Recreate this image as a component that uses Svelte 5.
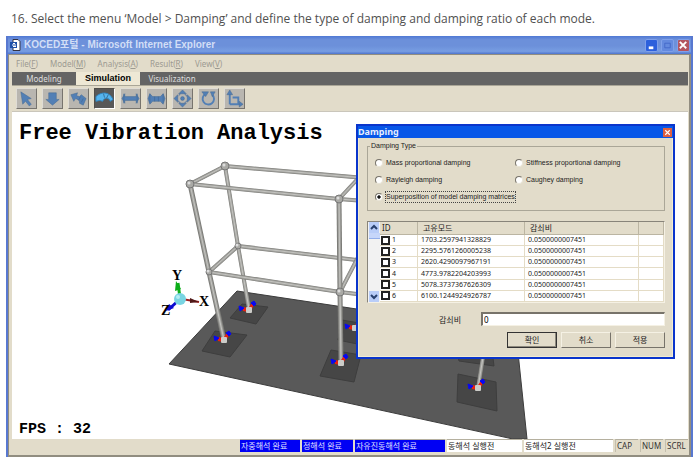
<script>
    const menus = [
        ["File", "F"],
        ["Model", "M"],
        ["Analysis", "A"],
        ["Result", "R"],
        ["View", "V"],
    ];
    const tabs = ["Modeling", "Simulation", "Visualization"];
    const tools = ["select", "load", "force", "free", "static", "dynamic", "pan", "rotate", "scale"];
    const dampingTypes = [
        "Mass proportional damping",
        "Stiffness proportional damping",
        "Rayleigh damping",
        "Caughey damping",
        "Superposition of model damping matrices",
    ];
    const modes = [
        "1703.2597941328829",
        "2295.5761260005238",
        "2620.4290097967191",
        "4773.9782204203993",
        "5078.3737367626309",
        "6100.1244924926787",
    ];
    const supports = [
        [250, 309],
        [225, 339],
        [356, 327],
        [342, 362],
        [479, 387],
    ];
    const pads = [
        "243,303 269,306 257,323 231,317",
        "216,330 248,334 231,356 203,350",
        "343,319 372,324 368,345 339,339",
        "332,349 362,354 355,381 321,375",
        "459,373 497,381 498,410 458,401",
        "458,352 494,357 495,365 460,360",
    ];
    // back members first so the front ones overlap them
    const members = [
        [226, 165, 366, 177],
        [239, 245, 366, 260],
        [226, 165, 239, 245],
        [239, 245, 250, 308],
        [340, 198, 366, 170],
        [341, 291, 366, 243],
        [191, 183, 226, 165],
        [210, 271, 239, 245],
        [485, 350, 479, 387],
        [191, 183, 340, 198],
        [340, 198, 366, 200],
        [210, 271, 341, 291],
        [341, 291, 366, 294],
    ];
    const columns = [
        [191, 183, 210, 271],
        [210, 271, 225, 339],
        [340, 198, 341, 291],
        [341, 291, 342, 361],
    ];
    const joints = [
        [226, 165, 4],
        [191, 183, 4],
        [340, 198, 4],
        [239, 245, 3],
        [210, 271, 3],
        [341, 291, 4],
    ];

    let activeTab = "Simulation";
    let activeTool = "free";
    let dampingType = dampingTypes[4];
    let ratio = "0";
</script>

<p class="caption">16. Select the menu ‘Model &gt; Damping’ and define the type of damping and damping ratio of each mode.</p>

<div class="window">
    <header class="titlebar">
        <svg class="app-icon" viewBox="0 0 11 12">
            <path d="M3 0.500h5l2 2v9H3z" fill="#fff" stroke="#334" stroke-width="1" />
            <path d="M0 3h7v6H0z" fill="#1c4fa8" />
            <path d="M2 6h4M3 4.500h2M3 7.500h3" stroke="#fff" stroke-width="1" />
        </svg>
        <h1>KOCED포털 - Microsoft Internet Explorer</h1>
        <button class="ctl" aria-label="Minimize"><svg viewBox="0 0 12 12"><path d="M3 7h5v3H3z" fill="#fff" /></svg></button>
        <button class="ctl dim" aria-label="Maximize"><svg viewBox="0 0 12 12"><path d="M3 3.500h6v5H3z" fill="none" stroke="#4468c8" /></svg></button>
        <button class="ctl close" aria-label="Close"><svg viewBox="0 0 12 12"><path d="M2 2l7 7M9 2l-7 7" stroke="#fff" stroke-width="2" /></svg></button>
    </header>

    <div class="body">
        <nav class="menubar">
            {#each menus as [name, key]}
                <button>{name}(<u>{key}</u>)</button>
            {/each}
        </nav>

        <div class="tabs">
            {#each tabs as tab}
                <button class:active={activeTab === tab} on:click={() => (activeTab = tab)}>{tab}</button>
            {/each}
        </div>

        <div class="toolbar">
            {#each tools as tool}
                <button class:active={activeTool === tool} aria-label={tool} on:click={() => (activeTool = tool)}>
                    <svg viewBox="0 0 20 20">
                        {#if tool === "select"}
                            <path class="fill" d="M4 3l11 7-4 1 4 5-2 2-4-5-3 3z" />
                        {:else if tool === "load"}
                            <path class="fill" d="M6 4h8v7h3l-7 6-7-6h3z" />
                        {:else if tool === "force"}
                            <path class="fill" d="M2 6l7-2-1 3 3 1 2-2 5 4-3 7-4-2v-3l-4-2-2 3z" />
                            <path d="M12 8l-2 4M15 10l-2 4" />
                        {:else if tool === "free"}
                            <path class="bright" d="M1 8c5-5 14-6 18 3l-3 2c-1-4-6-5-8 0l-3-1-4 1z" />
                            <path class="gap" d="M9 5l1 4M14 6l-2 4" />
                        {:else if tool === "static"}
                            <path class="fill" d="M1 10l3-5v3h12V5l3 5-3 5v-3H4v3z" />
                            <path d="M3 5v10M17 5v10" />
                        {:else if tool === "dynamic"}
                            <path class="fill" d="M1 10l2-5 3 3h8l3-3 2 5-2 6-3-3H6l-3 3z" />
                            <path d="M3 5v10M17 5v10M8 8v5M12 8v5" />
                        {:else if tool === "pan"}
                            <path class="fill" d="M10 1l4 4H6zM10 19l4-4H6zM1 10l4-4v8zM19 10l-4-4v8z" />
                            <circle class="fill" cx="10" cy="10" r="2" />
                            <path d="M6 7l2-2M12 5l3 3M15 12l-3 3M8 15l-3-3" />
                        {:else if tool === "rotate"}
                            <path class="ring" d="M7 5a6 6 0 1 0 7 1" />
                            <path class="fill" d="M3 3h7l-3 5zM12 3h5l-3 5z" />
                        {:else}
                            <path class="edge" d="M5 16V5M5 16h11M8 9h6v6" />
                            <path class="fill" d="M5 1l3 5H2zM19 16l-4-3v6z" />
                        {/if}
                    </svg>
                </button>
            {/each}
        </div>

        <svg class="scene" viewBox="13 111 676 327">
            <text class="heading" x="20" y="138">Free Vibration Analysis</text>
            <polygon points="170,363 238,290 517,332 528,438 514,438" fill="#595959" stroke="#3c3c3c" />
            {#each pads as points}
                <polygon {points} fill="#464646" stroke="#3e3e3e" />
            {/each}
            {#each members as [x1, y1, x2, y2]}
                <line class="tube-edge" {x1} {y1} {x2} {y2} />
                <line class="tube" {x1} {y1} {x2} {y2} />
                <line class="shine" {x1} {y1} {x2} {y2} />
            {/each}
            {#each columns as [x1, y1, x2, y2]}
                <line class="tube-edge column" {x1} {y1} {x2} {y2} />
                <line class="tube" {x1} {y1} {x2} {y2} />
                <line class="shine" {x1} {y1} {x2} {y2} />
            {/each}
            {#each joints as [cx, cy, r]}
                <circle {cx} {cy} {r} fill="#a9a9a5" stroke="#777" />
                <circle cx={cx - 1} cy={cy - 1} r="1.500" fill="#ddd" />
            {/each}
            {#each supports as [x, y]}
                <g transform="translate({x} {y})">
                    <path d="M-6 -3l5 1v4l-5-1zM0-3l3-4 2 2-2 4z" fill="#e82010" />
                    <path d="M-10 -4l5 2-4 3zM2-7l3-2 2 3-2 2z" fill="#0808f0" stroke="#0808f0" />
                    <rect x="-3" y="-3" width="6" height="6" rx="1" fill="#ccccc8" />
                </g>
            {/each}
            <path d="M181 297l-2-15" stroke="#0cae18" stroke-width="3" />
            <path d="M177 280l5 8-6 2z" fill="#0cae18" />
            <path d="M183 298l17 3" stroke="#a02020" stroke-width="2" />
            <path d="M191 297l9 4-9 1z" fill="#501818" />
            <path d="M180 299l-11 10" stroke="#0b0bd0" stroke-width="3" />
            <path d="M167 310l3-7 5 4z" fill="#0b0bd0" />
            <circle cx="181" cy="298" r="6" fill="#79d4e2" />
            <circle cx="179" cy="296" r="2" fill="#b4eef4" />
            <text class="axis" x="173" y="279">Y</text>
            <text class="axis" x="200" y="305">X</text>
            <text class="axis" x="162" y="314">Z</text>
            <text class="fps" x="20" y="432">FPS : 32</text>
        </svg>

        <footer class="status">
            <span class="done s1">자중해석 완료</span>
            <span class="done s2">정해석 완료</span>
            <span class="done s3">자유진동해석 완료</span>
            <span class="todo s4">동해석 실행전</span>
            <span class="todo s5">동해석2 실행전</span>
            <span class="key">CAP</span>
            <span class="key">NUM</span>
            <span class="key">SCRL</span>
        </footer>
    </div>
</div>

<div class="dialog" role="dialog" aria-label="Damping">
    <header>
        <h2>Damping</h2>
        <button aria-label="Close dialog"><svg viewBox="0 0 8 8"><path d="M2 2l4 4M6 2l-4 4" stroke="#fff" /></svg></button>
    </header>
    <div class="content">
        <fieldset>
            <legend>Damping Type</legend>
            {#each dampingTypes as type}
                <label class:focused={dampingType === type}>
                    <input type="radio" name="damping" value={type} bind:group={dampingType} />
                    <span>{type}</span>
                </label>
            {/each}
        </fieldset>

        <div class="list">
            <div class="scroll">
                <button aria-label="Scroll up"><svg viewBox="0 0 10 10"><path d="M2 6l3-3 3 3" /></svg></button>
                <i></i>
                <button aria-label="Scroll down"><svg viewBox="0 0 10 10"><path d="M2 3l3 3 3-3" /></svg></button>
            </div>
            <table>
                <thead>
                    <tr><th class="id">ID</th><th class="mode">고유모드</th><th class="ratio">감쇠비</th><th></th></tr>
                </thead>
                <tbody>
                    {#each modes as mode, i}
                        <tr>
                            <td><label><input type="checkbox" />{i + 1}</label></td>
                            <td>{mode}</td>
                            <td>0.0500000007451</td>
                            <td></td>
                        </tr>
                    {/each}
                </tbody>
            </table>
        </div>

        <div class="field">
            <label for="ratio">감쇠비</label>
            <input id="ratio" type="text" bind:value={ratio} />
        </div>

        <div class="actions">
            <button class="default">확인</button>
            <button>취소</button>
            <button>적용</button>
        </div>
    </div>
</div>

<style>
    :global(body) {
        background: #fff;
        font-family: "Noto Sans", "Noto Sans CJK KR", sans-serif;
    }

    button {
        margin: 0;
        padding: 0;
        border: 0;
        font-family: inherit;
        cursor: pointer;
    }

    svg {
        display: block;
    }

    .caption {
        margin: 0;
        padding: 9px 11px;
        height: 18px;
        font: 12px/20px "Open Sans", sans-serif;
        color: #505050;
        white-space: nowrap;
    }

    .window {
        margin: 0 7px 0 6px;
        border: solid #5878d0;
        border-width: 0 2px;
        background: #e2dcca;
    }

    .titlebar {
        display: flex;
        align-items: center;
        gap: 3px;
        height: 18px;
        padding: 0 1px 0 2px;
        background: linear-gradient(#4f78d4, #6c90da 20%, #6c90da 55%, #779de2 85%, #4d74cd);
    }

    .app-icon {
        width: 11px;
        height: 12px;
    }

    h1 {
        flex: 1;
        margin: 0;
        font-family: "Liberation Sans", "Noto Sans CJK KR", sans-serif;
        font-size: 10px;
        line-height: 16px;
        font-weight: bold;
        color: #d2def6;
    }

    .ctl {
        width: 13px;
        height: 13px;
        border: 1px solid #7fa0ea;
        border-radius: 2px;
        background: #2c60dc;
    }

    .ctl.dim {
        background: #648ade;
    }

    .ctl.close {
        background: #b35560;
    }

    .body {
        border: solid #918d80;
        border-width: 1px 2px 2px 1px;
        padding: 0 1px 2px 3px;
    }

    .menubar {
        display: flex;
        gap: 12px;
        height: 17px;
        padding-left: 4px;
    }

    .menubar button {
        background: none;
        font-size: 8px;
        line-height: 17px;
        color: #9c9a91;
    }

    .tabs {
        display: flex;
        height: 13px;
        background: #646464;
        border-bottom: 1px solid #aaa697;
    }

    .tabs button {
        width: 64px;
        background: #646464;
        font-size: 8px;
        line-height: 11px;
        color: #dedede;
    }

    .tabs button.active {
        background: #eee8d5;
        color: #000;
        font-family: "Liberation Sans", sans-serif;
        font-size: 9px;
        font-weight: bold;
    }

    .toolbar {
        display: flex;
        align-items: center;
        gap: 5px;
        height: 25px;
        padding-left: 4px;
        border-bottom: 1px solid #cac6bb;
    }

    .toolbar button {
        width: 21px;
        height: 21px;
        box-sizing: border-box;
        border: 1px solid;
        border-color: #dfdcd5 #77746e #77746e #dfdcd5;
        background: #b9b6b0;
    }

    .toolbar button.active {
        background: #585858;
        border-color: #504e4a #fff #fff #504e4a;
    }

    .toolbar path {
        fill: none;
        stroke: #466e9e;
    }

    .toolbar .fill {
        fill: #527fb5;
        stroke: #43698f;
        stroke-width: 0.5;
    }

    .toolbar .ring {
        stroke: #527fb5;
        stroke-width: 2;
    }

    .toolbar .edge {
        stroke: #527fb5;
        stroke-width: 2;
    }

    .toolbar .bright {
        fill: #54b4ef;
        stroke: #2f83bd;
    }

    .toolbar .gap {
        stroke: #386f98;
    }

    .scene {
        width: 100%;
        background: #fff;
    }

    .heading,
    .fps {
        font-family: "Liberation Mono", monospace;
        font-weight: bold;
        font-size: 22px;
        white-space: pre;
    }

    .fps {
        font-size: 15px;
    }

    .axis {
        font-family: "Liberation Serif", serif;
        font-weight: bold;
        font-size: 14px;
    }

    .tube-edge {
        stroke: #7c7c78;
        stroke-width: 4;
    }

    .column {
        stroke-width: 5;
    }

    .tube {
        stroke: #a0a09c;
        stroke-width: 3;
    }

    .shine {
        stroke: #c4c4c0;
        stroke-width: 1;
    }

    .status {
        display: flex;
        justify-content: flex-end;
        gap: 2px;
        height: 14px;
        font-size: 8px;
        line-height: 12px;
        white-space: nowrap;
    }

    .status span {
        box-sizing: border-box;
        height: 13px;
        padding-left: 1px;
        border-top: 1px solid #b5b09f;
        overflow: hidden;
    }

    .done {
        background: #0000f4;
        color: #e2e2ff;
    }

    .todo {
        background: #fff;
        color: #222;
    }

    .s1 {
        width: 60px;
    }

    .s2 {
        width: 51px;
    }

    .s3 {
        width: 90px;
    }

    .s4 {
        width: 75px;
    }

    .s5 {
        width: 89px;
    }

    .key {
        width: 23px;
        color: #333;
        border-left: 1px solid #c4bfae;
    }

    .dialog {
        position: absolute;
        left: 356px;
        top: 124px;
        width: 319px;
        box-sizing: border-box;
        border: 2px solid #0a35cc;
        background: #e2dcca;
        font-size: 7px;
        color: #222;
    }

    .dialog header {
        display: flex;
        align-items: center;
        justify-content: space-between;
        height: 12px;
        padding-right: 1px;
        background: #0757e8;
    }

    h2 {
        margin: 0;
        font-size: 9px;
        line-height: 12px;
        color: #e6eeff;
    }

    .dialog header button {
        width: 9px;
        height: 9px;
        background: #e0603f;
    }

    .content {
        padding: 3px 7px 8px 8px;
        border: solid #f3edd0;
        border-width: 0 1px 1px;
    }

    fieldset {
        display: grid;
        grid-template-columns: 140px 1fr;
        grid-template-rows: 16px 17px 18px;
        align-items: center;
        height: 70px;
        box-sizing: border-box;
        margin: 0;
        padding: 4px 8px 0 7px;
        border: 1px solid #aaa697;
        font-family: "Liberation Sans", sans-serif;
    }

    legend {
        margin-left: -5px;
        padding: 0 1px;
        font-size: 7px;
        line-height: 10px;
    }

    fieldset label {
        display: flex;
        align-items: center;
        gap: 3px;
        line-height: 10px;
        white-space: nowrap;
    }

    fieldset label.focused {
        grid-column: span 2;
    }

    .focused span {
        outline: 1px dotted #444;
    }

    input {
        appearance: none;
        margin: 0;
        box-sizing: border-box;
        background: #fff;
    }

    input[type="radio"] {
        width: 8px;
        height: 8px;
        border: 1px solid;
        border-color: #77736a #e9e5d8 #e9e5d8 #77736a;
        border-radius: 50%;
    }

    input[type="radio"]:checked {
        background: radial-gradient(#111 30%, #fff 50%);
    }

    .list {
        display: flex;
        height: 82px;
        box-sizing: border-box;
        margin-top: 10px;
        border: 1px solid;
        border-color: #88847a #f5f1e4 #f5f1e4 #88847a;
        background: #fff;
        overflow: hidden;
    }

    .scroll {
        display: flex;
        flex-direction: column;
        width: 11px;
        padding-left: 1px;
        background: #f2f2f2;
    }

    .scroll button {
        width: 10px;
        height: 11px;
        background: #b9cdf8;
    }

    .scroll path {
        fill: none;
        stroke: #28406e;
        stroke-width: 2;
    }

    .scroll i {
        height: 5px;
        margin-bottom: auto;
        border-bottom: 1px solid #92aeea;
        background: #c6d6fa;
    }

    table {
        flex: 1;
        table-layout: fixed;
        border-collapse: collapse;
    }

    th,
    td {
        height: 10px;
        padding: 0 0 0 3px;
        border: solid #e4dcc6;
        border-width: 0 1px 1px 0;
        line-height: 10px;
        text-align: left;
        white-space: nowrap;
    }

    th {
        height: 12px;
        padding-left: 5px;
        background: #e2dcca;
        border-color: #bbb5a2;
        font-size: 8px;
        font-weight: normal;
    }

    th.id {
        padding-left: 2px;
    }

    td:first-child {
        padding-left: 1px;
    }

    .id {
        width: 35px;
    }

    .mode {
        width: 101px;
    }

    .ratio {
        width: 108px;
    }

    td label {
        display: flex;
        align-items: center;
        gap: 2px;
    }

    input[type="checkbox"] {
        width: 9px;
        height: 9px;
        border: 2px solid #222;
    }

    .field {
        display: flex;
        align-items: center;
        justify-content: flex-end;
        gap: 20px;
        margin-top: 9px;
        font-size: 8px;
    }

    .field input {
        width: 184px;
        height: 14px;
        padding: 0 1px;
        border: 1px solid;
        border-width: 2px 1px 1px 2px;
        border-color: #77736a #f5f1e4 #f5f1e4 #77736a;
        font: inherit;
    }

    .actions {
        display: flex;
        justify-content: flex-end;
        gap: 4px;
        margin-top: 6px;
    }

    .actions button {
        width: 50px;
        height: 16px;
        box-sizing: border-box;
        border: 1px solid;
        border-color: #f5f1e4 #77736a #77736a #f5f1e4;
        background: #e2dcca;
        font-size: 8px;
        line-height: 12px;
        color: #222;
    }

    .actions .default {
        border: 1px solid #333;
        box-shadow: inset -1px -1px #8d897d;
    }
</style>
